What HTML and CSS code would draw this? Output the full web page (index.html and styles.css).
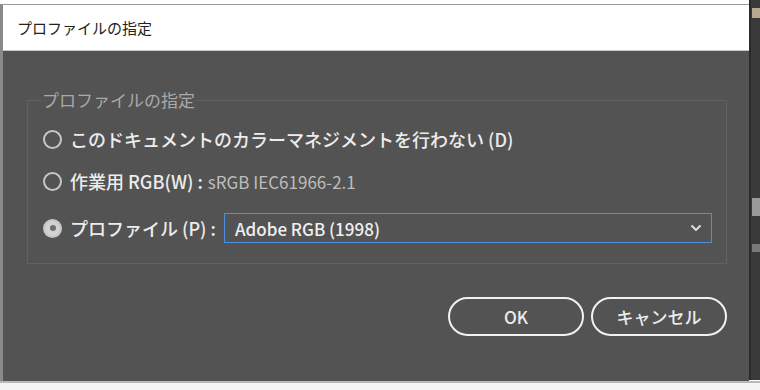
FILE: index.html
```html
<!DOCTYPE html>
<html lang="ja">
<head>
  <meta charset="UTF-8" />
  <meta name="viewport" content="width=device-width, initial-scale=1" />
  <title>プロファイルの指定</title>
  <link rel="stylesheet" href="styles.css">
</head>
<body>
  <div class="screen">
    <div class="dialog">
      <div class="titlebar">プロファイルの指定</div>
      <div class="dialog-body">
        <fieldset class="group">
          <legend>プロファイルの指定</legend>

          <label class="row row-first">
            <span class="radio"></span>
            <span class="label">このドキュメントのカラーマネジメントを行わない (D)</span>
          </label>

          <label class="row row-second">
            <span class="radio"></span>
            <span class="label">作業用 RGB(W) :</span>
            <span class="value">sRGB IEC61966-2.1</span>
          </label>

          <label class="row row-third">
            <span class="radio checked"></span>
            <span class="label">プロファイル (P) :</span>
            <span class="select">
              <span>Adobe RGB (1998)</span>
              <svg width="12" height="8" viewBox="0 0 12 8"><path d="M1.5 1.5 L6 6 L10.5 1.5" fill="none" stroke="#e6e6e6" stroke-width="1.8"/></svg>
            </span>
          </label>
        </fieldset>

        <div class="buttons">
          <button class="button">OK</button>
          <button class="button">キャンセル</button>
        </div>
      </div>
    </div>
    <div class="backdrop">
      <span class="bit bit-a"></span>
      <span class="bit bit-b"></span>
      <span class="bit bit-c"></span>
    </div>
  </div>
  <div class="bottom"></div>
</body>
</html>
```

FILE: styles.css
```css
body {
  margin: 0;
  padding: 0;
  background: #ffffff;
  font-family: "Noto Sans CJK JP", "Noto Sans", sans-serif;
  width: 760px;
  height: 390px;
  overflow: hidden;
}
.screen {
  display: flex;
  padding-top: 4px;
}
.dialog {
  width: 747px;
  height: 376px;
  border-left: 3px solid #8a8a8a;
  border-top: 1px solid #9a9a9a;
  background: #535353;
  display: flex;
  flex-direction: column;
}
.titlebar {
  height: 45px;
  background: #ffffff;
  border-bottom: 1px solid #c8c8c8;
  color: #222;
  font-size: 15px;
  line-height: 45px;
  padding-left: 14px;
}
.dialog-body {
  padding: 37px 22px 0 24px;
}
.group {
  margin: 0;
  border: 1px solid #616161;
  padding: 0 0 15px 15px;
}
.group legend {
  color: #a9a9a9;
  font-size: 17px;
  line-height: 24px;
  padding: 0 1px;
  margin-left: -2px;
}
.row {
  display: flex;
  align-items: center;
  height: 40px;
  color: #ececec;
  font-size: 18px;
  font-weight: 500;
}
.row-first {
  margin-top: 7px;
}
.row-second {
  margin-top: 2px;
}
.row-third {
  margin-top: 7px;
}
.radio {
  width: 15px;
  height: 15px;
  border: 2px solid #c6c6c6;
  border-radius: 50%;
  margin-right: 8px;
  flex: none;
  display: flex;
  align-items: center;
  justify-content: center;
}
.radio.checked {
  background: #d2d2d2;
}
.radio.checked::after {
  content: "";
  width: 6px;
  height: 6px;
  border-radius: 50%;
  background: #6e6e6e;
}
.value {
  color: #bdbdbd;
  font-weight: normal;
  font-size: 17px;
  margin-left: 5px;
}
.select {
  margin-left: 8px;
  width: 467px;
  height: 28px;
  border: 1px solid #4d90de;
  display: flex;
  align-items: center;
  justify-content: space-between;
  padding: 0 9px 0 10px;
  font-size: 17px;
  color: #f0f0f0;
}
.buttons {
  display: flex;
  justify-content: flex-end;
  gap: 7px;
  margin-top: 33px;
}
.button {
  width: 136px;
  height: 39px;
  border: 2px solid #f2f2f2;
  border-radius: 20px;
  background: transparent;
  color: #ececec;
  font-family: "Noto Sans CJK JP", "Noto Sans", sans-serif;
  font-size: 17px;
  font-weight: 500;
  cursor: pointer;
}
.backdrop {
  flex: 1;
  height: 380px;
  margin-top: -4px;
  background: #3a3a3a;
  border-left: 2px solid #2a2a2a;
  display: flex;
  flex-direction: column;
}
.bit {
  display: block;
  width: 8px;
  margin-left: 1px;
}
.bit-a {
  height: 10px;
  margin-top: 8px;
  background: #b8a890;
}
.bit-b {
  height: 18px;
  margin-top: 180px;
  background: #9a9a9a;
}
.bit-c {
  height: 8px;
  margin-top: 28px;
  background: #7a7a7a;
}
.bottom {
  height: 10px;
  border-top: 2px solid #b8b8b8;
  background: #f4f4f4;
}
```
